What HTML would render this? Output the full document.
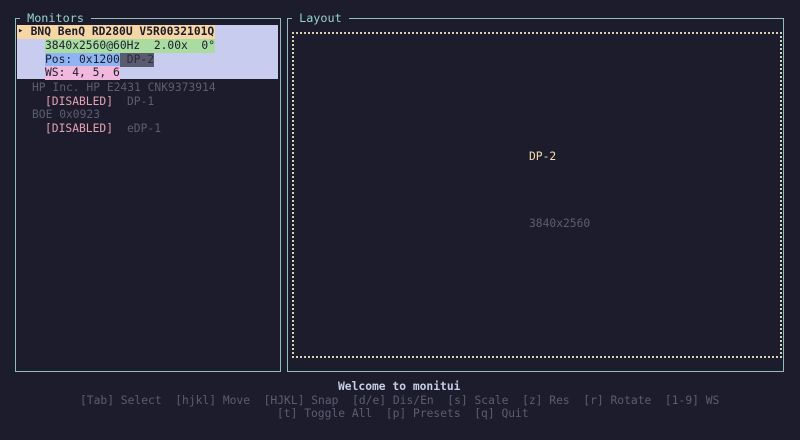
<!DOCTYPE html>
<html><head><meta charset="utf-8"><style>
body{margin:0;width:800px;height:440px;background:#1d1c2c;overflow:hidden;position:relative;font-family:"DejaVu Sans Mono","Liberation Mono",monospace;font-size:11.3px;}
.t{position:absolute;white-space:pre;line-height:13.6px;height:13.6px;}
.box{position:absolute;border:1.5px solid #8fbcbc;}
.ttl{position:absolute;background:#1d1c2c;color:#94d2cc;white-space:pre;line-height:13.6px;font-size:11.8px;}
.b{font-weight:bold}
</style></head><body>
<div class="box" style="left:15px;top:18px;width:264px;height:352px"></div>
<div class="ttl" style="left:20px;top:12px"> Monitors </div>
<div class="box" style="left:287px;top:18px;width:495px;height:352px"></div>
<div class="ttl" style="left:292px;top:12px"> Layout </div>
<div style="position:absolute;left:292px;top:32px;width:486px;height:322px;border:2px dotted #d8d0b0"></div>
<div style="position:absolute;left:17px;top:25px;width:261px;height:54px;background:#c8cdf0"></div>
<div class="t b" style="left:17px;top:25px;width:198px;background:#f7d6a6;color:#1d1c2c">  BNQ BenQ RD280U V5R0032101Q</div>
<div class="t" style="left:18px;top:25px;color:#1d1c2c;font-size:9px">▸</div>
<div class="t" style="left:45px;top:39px;background:#a8dca0;color:#1d1c2c">3840x2560@60Hz  2.00x  0°</div>
<div class="t" style="left:45px;top:53px;background:#8fb4f4;color:#1d1c2c">Pos: 0x1200</div>
<div class="t" style="left:120px;top:53px;background:#5a5b6e;color:#2a2a3a"> DP-2</div>
<div class="t" style="left:45px;top:66px;background:#f0b8dc;color:#1d1c2c">WS: 4, 5, 6</div>
<div class="t" style="left:32px;top:81px;color:#5c5d70">HP Inc. HP E2431 CNK9373914</div>
<div class="t" style="left:45px;top:95px;color:#e6a2b2">[DISABLED]</div>
<div class="t" style="left:127px;top:95px;color:#5c5d70">DP-1</div>
<div class="t" style="left:32px;top:108px;color:#5c5d70">BOE 0x0923</div>
<div class="t" style="left:45px;top:122px;color:#e6a2b2">[DISABLED]</div>
<div class="t" style="left:127px;top:122px;color:#5c5d70">eDP-1</div>
<div class="t" style="left:529px;top:150px;color:#f2dfb0">DP-2</div>
<div class="t" style="left:529px;top:217px;color:#5c5d70">3840x2560</div>
<div class="t b" style="left:338px;top:380px;color:#c8cce4">Welcome to monitui</div>
<div class="t" style="left:80px;top:394px;color:#5c5d70">[Tab] Select  [hjkl] Move  [HJKL] Snap  [d/e] Dis/En  [s] Scale  [z] Res  [r] Rotate  [1-9] WS</div>
<div class="t" style="left:277px;top:407px;color:#5c5d70">[t] Toggle All  [p] Presets  [q] Quit</div>
</body></html>
